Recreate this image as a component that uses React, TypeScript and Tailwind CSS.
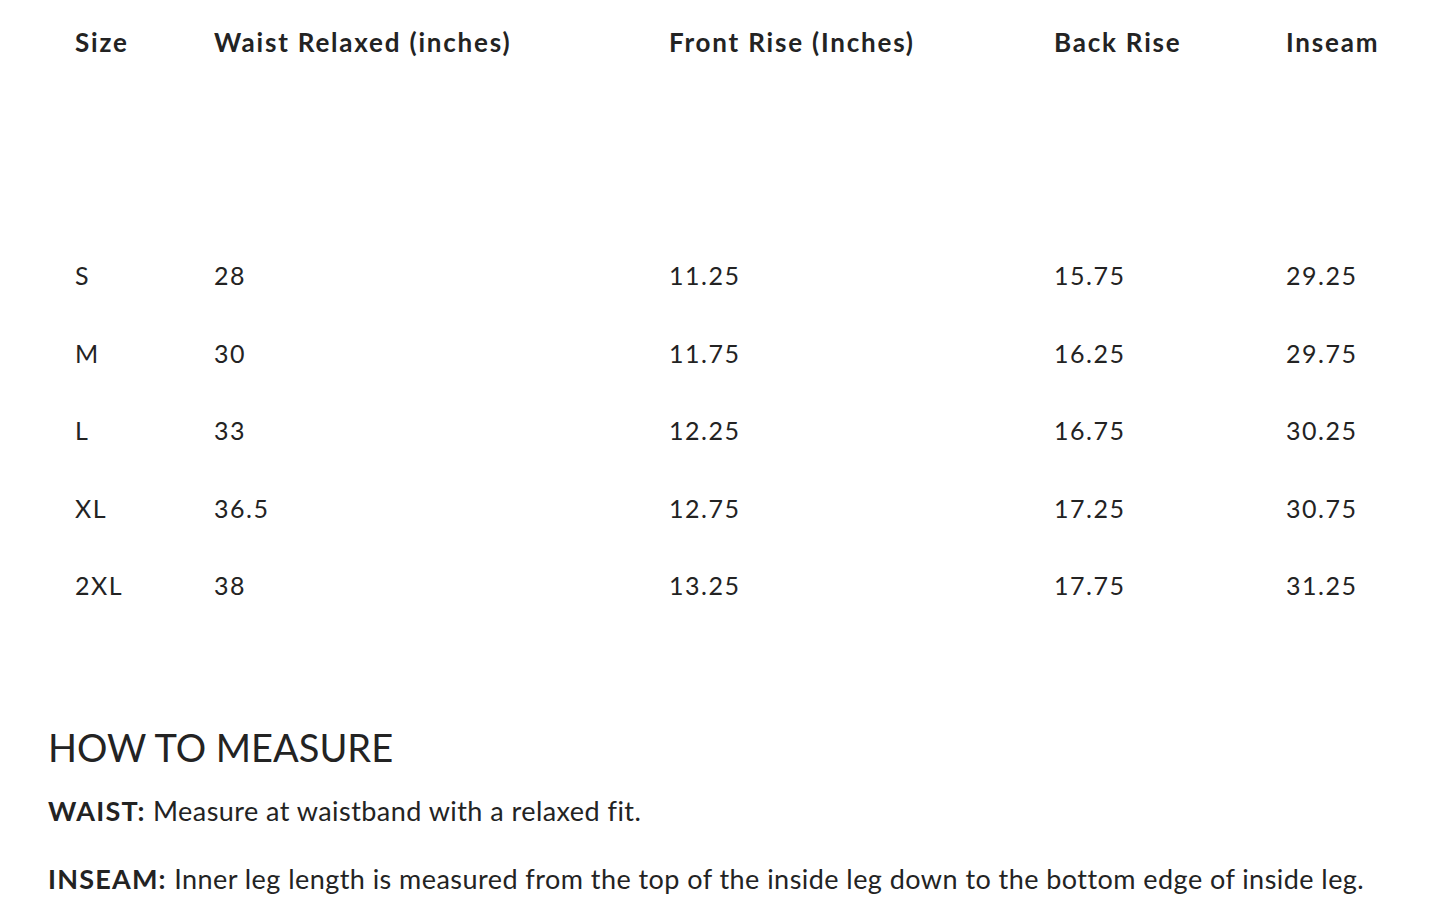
import React from 'react';

const rows = [
  ['S', '28', '11.25', '15.75', '29.25'],
  ['M', '30', '11.75', '16.25', '29.75'],
  ['L', '33', '12.25', '16.75', '30.25'],
  ['XL', '36.5', '12.75', '17.25', '30.75'],
  ['2XL', '38', '13.25', '17.75', '31.25'],
];

const headers = ['Size', 'Waist Relaxed (inches)', 'Front Rise (Inches)', 'Back Rise', 'Inseam'];

const cols = 'grid grid-cols-[139px_455px_385px_232px_1fr]';

export default function App() {
  return (
    <div className="min-h-screen bg-white text-[#232323] font-['Lato',sans-serif]">
      <div className="pl-[75px]">
        <div className={`${cols} h-[84px] items-center text-[26px] font-bold tracking-[1.8px]`}>
          {headers.map((h) => (
            <div key={h}>{h}</div>
          ))}
        </div>
        <div className="mt-[153px]">
          {rows.map((r) => (
            <div key={r[0]} className={`${cols} h-[77.5px] items-center text-[25px] tracking-[1.5px]`}>
              {r.map((c, i) => (
                <div key={i}>{c}</div>
              ))}
            </div>
          ))}
        </div>
      </div>

      <div className="pl-[48px] mt-[98px]">
        <h2 className="text-[38px] leading-[48px] font-normal">HOW TO MEASURE</h2>
        <p className="mt-[24px] text-[27px] leading-[32px] tracking-[0.45px]">
          <span className="font-bold tracking-[1.2px]">WAIST:</span> Measure at waistband with a relaxed fit.
        </p>
        <p className="mt-[36px] text-[27px] leading-[32px] tracking-[0.45px]">
          <span className="font-bold tracking-[1.2px]">INSEAM:</span> Inner leg length is measured from the top of the inside leg down to the bottom edge of inside leg.
        </p>
      </div>
    </div>
  );
}
